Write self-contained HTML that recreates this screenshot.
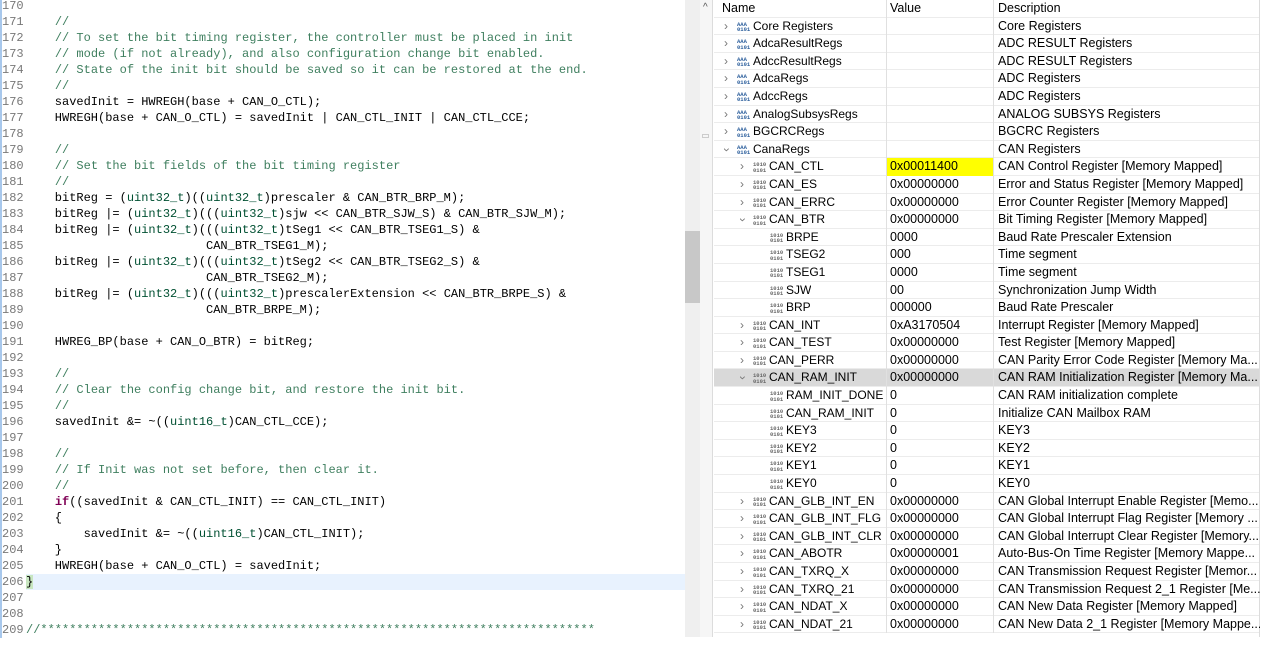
<!DOCTYPE html>
<html><head><meta charset="utf-8"><style>
*{margin:0;padding:0;box-sizing:border-box}
body{width:1262px;height:637px;overflow:hidden;background:#fff;position:relative;font-family:"Liberation Sans",sans-serif}
#code{position:absolute;left:0;top:-2px;width:685px;height:660px;font-family:"Liberation Mono",monospace;font-size:12px;line-height:16px;color:#000}
#code .l{height:16px;position:relative;white-space:pre}
#code .n{display:inline-block;width:26px;color:#787878;border-left:2px solid #a8c8ec}
.c{color:#3f7f5f}.k{color:#7f0055;font-weight:bold}.t{color:#005032}
.hl{background:#e8f2fe}
#sb{position:absolute;left:685px;top:0;width:15px;height:637px;background:#efefef}
#thumb{position:absolute;left:685px;top:231px;width:15px;height:72px;background:#c8c8c8}
#gut{position:absolute;left:700px;top:0;width:13px;height:637px;background:#f6f6f6;border-right:1px solid #dcdcdc}
#tbl{position:absolute;left:714px;top:0;width:546px;height:637px;border-right:1px solid #dcdcdc;font-size:12.5px;color:#000}
.r{height:17.6px;line-height:17.6px;position:relative;border-bottom:1px solid #ececec;white-space:nowrap}
.r span{position:absolute;top:0;overflow:hidden;height:17.6px}
.a{left:0;width:172px;font-size:12px}.v{left:172px;width:107px;padding-left:3px;border-left:1px solid #e0e0e0}.d{left:279px;width:267px;padding-left:4px;border-left:1px solid #e0e0e0}
.sel{background:#d9d9d9}
.r span.ch{color:#777;font-size:12px;width:8px;text-align:center}
.r span.ic{top:4px;width:13px;height:11px;font-size:5.5px;line-height:5.5px;font-weight:bold;font-family:"Liberation Mono",monospace;color:#666}
</style></head><body>
<div id="code">
<div class="l"><span class="n">170</span></div>
<div class="l"><span class="n">171</span>    <span class="c">//</span></div>
<div class="l"><span class="n">172</span>    <span class="c">// To set the bit timing register, the controller must be placed in init</span></div>
<div class="l"><span class="n">173</span>    <span class="c">// mode (if not already), and also configuration change bit enabled.</span></div>
<div class="l"><span class="n">174</span>    <span class="c">// State of the init bit should be saved so it can be restored at the end.</span></div>
<div class="l"><span class="n">175</span>    <span class="c">//</span></div>
<div class="l"><span class="n">176</span>    savedInit = HWREGH(base + CAN_O_CTL);</div>
<div class="l"><span class="n">177</span>    HWREGH(base + CAN_O_CTL) = savedInit | CAN_CTL_INIT | CAN_CTL_CCE;</div>
<div class="l"><span class="n">178</span></div>
<div class="l"><span class="n">179</span>    <span class="c">//</span></div>
<div class="l"><span class="n">180</span>    <span class="c">// Set the bit fields of the bit timing register</span></div>
<div class="l"><span class="n">181</span>    <span class="c">//</span></div>
<div class="l"><span class="n">182</span>    bitReg = (<span class="t">uint32_t</span>)((<span class="t">uint32_t</span>)prescaler &amp; CAN_BTR_BRP_M);</div>
<div class="l"><span class="n">183</span>    bitReg |= (<span class="t">uint32_t</span>)(((<span class="t">uint32_t</span>)sjw &lt;&lt; CAN_BTR_SJW_S) &amp; CAN_BTR_SJW_M);</div>
<div class="l"><span class="n">184</span>    bitReg |= (<span class="t">uint32_t</span>)(((<span class="t">uint32_t</span>)tSeg1 &lt;&lt; CAN_BTR_TSEG1_S) &amp;</div>
<div class="l"><span class="n">185</span>                         CAN_BTR_TSEG1_M);</div>
<div class="l"><span class="n">186</span>    bitReg |= (<span class="t">uint32_t</span>)(((<span class="t">uint32_t</span>)tSeg2 &lt;&lt; CAN_BTR_TSEG2_S) &amp;</div>
<div class="l"><span class="n">187</span>                         CAN_BTR_TSEG2_M);</div>
<div class="l"><span class="n">188</span>    bitReg |= (<span class="t">uint32_t</span>)(((<span class="t">uint32_t</span>)prescalerExtension &lt;&lt; CAN_BTR_BRPE_S) &amp;</div>
<div class="l"><span class="n">189</span>                         CAN_BTR_BRPE_M);</div>
<div class="l"><span class="n">190</span></div>
<div class="l"><span class="n">191</span>    HWREG_BP(base + CAN_O_BTR) = bitReg;</div>
<div class="l"><span class="n">192</span></div>
<div class="l"><span class="n">193</span>    <span class="c">//</span></div>
<div class="l"><span class="n">194</span>    <span class="c">// Clear the config change bit, and restore the init bit.</span></div>
<div class="l"><span class="n">195</span>    <span class="c">//</span></div>
<div class="l"><span class="n">196</span>    savedInit &amp;= ~((<span class="t">uint16_t</span>)CAN_CTL_CCE);</div>
<div class="l"><span class="n">197</span></div>
<div class="l"><span class="n">198</span>    <span class="c">//</span></div>
<div class="l"><span class="n">199</span>    <span class="c">// If Init was not set before, then clear it.</span></div>
<div class="l"><span class="n">200</span>    <span class="c">//</span></div>
<div class="l"><span class="n">201</span>    <span class="k">if</span>((savedInit &amp; CAN_CTL_INIT) == CAN_CTL_INIT)</div>
<div class="l"><span class="n">202</span>    {</div>
<div class="l"><span class="n">203</span>        savedInit &amp;= ~((<span class="t">uint16_t</span>)CAN_CTL_INIT);</div>
<div class="l"><span class="n">204</span>    }</div>
<div class="l"><span class="n">205</span>    HWREGH(base + CAN_O_CTL) = savedInit;</div>
<div class="l hl"><span class="n" style="background:#fff">206</span><span style="background:#c8e6c0">}</span></div>
<div class="l"><span class="n">207</span></div>
<div class="l"><span class="n">208</span></div>
<div class="l"><span class="n">209</span><span class="c">//*****************************************************************************</span></div>
</div>
<div id="sb"></div><div id="thumb"></div>
<div id="gut"><div style="position:absolute;left:3px;top:2px;font-size:10px;color:#555">^</div><div style="position:absolute;left:2px;top:134px;width:7px;height:4px;border:1px solid #ccc"></div></div>
<div id="tbl">
<div class="r"><span class="a" style="padding-left:8px;font-size:12.5px">Name</span><span class="v">Value</span><span class="d">Description</span></div>
</div>
<script>
var rows=[
[0,'c','Core Registers','','Core Registers'],
[0,'c','AdcaResultRegs','','ADC RESULT Registers'],
[0,'c','AdccResultRegs','','ADC RESULT Registers'],
[0,'c','AdcaRegs','','ADC Registers'],
[0,'c','AdccRegs','','ADC Registers'],
[0,'c','AnalogSubsysRegs','','ANALOG SUBSYS Registers'],
[0,'c','BGCRCRegs','','BGCRC Registers'],
[0,'o','CanaRegs','','CAN Registers'],
[1,'c','CAN_CTL','0x00011400','CAN Control Register [Memory Mapped]','y'],
[1,'c','CAN_ES','0x00000000','Error and Status Register [Memory Mapped]'],
[1,'c','CAN_ERRC','0x00000000','Error Counter Register [Memory Mapped]'],
[1,'o','CAN_BTR','0x00000000','Bit Timing Register [Memory Mapped]'],
[2,'','BRPE','0000','Baud Rate Prescaler Extension'],
[2,'','TSEG2','000','Time segment'],
[2,'','TSEG1','0000','Time segment'],
[2,'','SJW','00','Synchronization Jump Width'],
[2,'','BRP','000000','Baud Rate Prescaler'],
[1,'c','CAN_INT','0xA3170504','Interrupt Register [Memory Mapped]'],
[1,'c','CAN_TEST','0x00000000','Test Register [Memory Mapped]'],
[1,'c','CAN_PERR','0x00000000','CAN Parity Error Code Register  [Memory Ma...'],
[1,'o','CAN_RAM_INIT','0x00000000','CAN RAM Initialization Register [Memory Ma...','s'],
[2,'','RAM_INIT_DONE','0','CAN RAM initialization complete'],
[2,'','CAN_RAM_INIT','0','Initialize CAN Mailbox RAM'],
[2,'','KEY3','0','KEY3'],
[2,'','KEY2','0','KEY2'],
[2,'','KEY1','0','KEY1'],
[2,'','KEY0','0','KEY0'],
[1,'c','CAN_GLB_INT_EN','0x00000000','CAN Global Interrupt Enable Register [Memo...'],
[1,'c','CAN_GLB_INT_FLG','0x00000000','CAN Global Interrupt Flag Register [Memory ...'],
[1,'c','CAN_GLB_INT_CLR','0x00000000','CAN Global Interrupt Clear Register [Memory...'],
[1,'c','CAN_ABOTR','0x00000001','Auto-Bus-On Time Register [Memory Mappe...'],
[1,'c','CAN_TXRQ_X','0x00000000','CAN Transmission Request Register [Memor...'],
[1,'c','CAN_TXRQ_21','0x00000000','CAN Transmission Request 2_1 Register [Me...'],
[1,'c','CAN_NDAT_X','0x00000000','CAN New Data Register [Memory Mapped]'],
[1,'c','CAN_NDAT_21','0x00000000','CAN New Data 2_1 Register [Memory Mappe...']];
var t=document.getElementById('tbl'),h='';
rows.forEach(function(r){
 var ch='',ic,tx;
 var cx=[8,24,0][r[0]];
 if(r[1]=='c')ch='<span class="ch" style="left:'+cx+'px">&#x203A;</span>';
 if(r[1]=='o')ch='<span class="ch" style="left:'+cx+'px;transform:rotate(90deg)">&#x203A;</span>';
 if(r[0]==0){ic='<span class="ic" style="left:23px;color:#2a5d9b">AAA<br>0101</span>';tx=39;}
 else if(r[0]==1){ic='<span class="ic" style="left:39px">1010<br>0101</span>';tx=55;}
 else{ic='<span class="ic" style="left:56px">1010<br>0101</span>';tx=72;}
 h+='<div class="r'+(r[5]=='s'?' sel':'')+'"><span class="a">'+ch+ic+'<span style="left:'+tx+'px">'+r[2]+'</span></span><span class="v"'+(r[5]=='y'?' style="background:#ffff00"':'')+'>'+r[3]+'</span><span class="d">'+r[4]+'</span></div>';
});
t.innerHTML+=h;
</script>
</body></html>
